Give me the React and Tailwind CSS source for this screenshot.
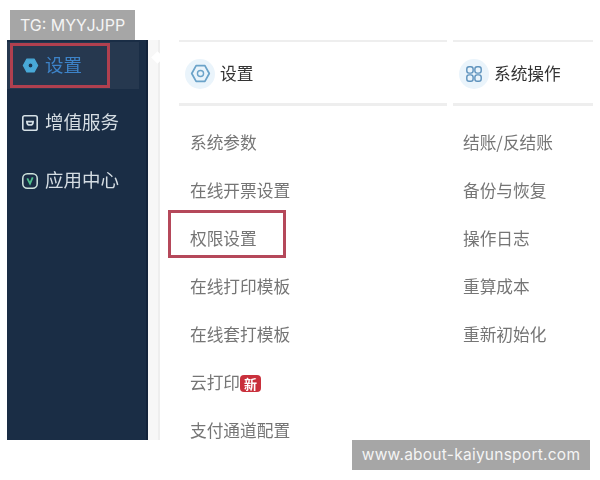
const FONT = { fontFamily: '"Noto Sans CJK SC", sans-serif' }

const LEFT_ITEMS = ['系统参数', '在线开票设置', '权限设置', '在线打印模板', '在线套打模板', '云打印', '支付通道配置']
const RIGHT_ITEMS = ['结账/反结账', '备份与恢复', '操作日志', '重算成本', '重新初始化']

function HexIcon({ className, fill, stroke, dot }) {
  return (
    <svg viewBox="0 0 24 24" className={className}>
      <path d="M7 3h10l5 9-5 9H7l-5-9z" fill={fill} stroke={stroke} strokeWidth="2" strokeLinejoin="round" />
      <circle cx="12" cy="12" r="3.5" fill={dot} stroke={stroke} strokeWidth="1.6" />
    </svg>
  )
}

function ServiceIcon() {
  return (
    <svg viewBox="0 0 20 20" className="w-[18px] h-[18px] shrink-0" fill="none" stroke="#d5e0e6" strokeWidth="1.8">
      <rect x="2" y="2" width="16" height="16" rx="2" />
      <path d="M6.5 8.5c0 5 7 5 7 0z" />
    </svg>
  )
}

function AppIcon() {
  return (
    <svg viewBox="0 0 20 20" className="w-[18px] h-[18px] shrink-0" fill="none">
      <rect x="2" y="2" width="16" height="16" rx="5" stroke="#cfe3dc" strokeWidth="1.7" />
      <path d="M7 7l3 6 3-7" stroke="#4fc08d" strokeWidth="2" />
    </svg>
  )
}

function GridIcon() {
  return (
    <svg viewBox="0 0 20 20" className="w-[18px] h-[18px]" fill="none" stroke="#5f93bd" strokeWidth="1.6">
      <rect x="2" y="2" width="7" height="7" rx="2.5" />
      <rect x="11" y="2" width="7" height="7" rx="2.5" />
      <rect x="2" y="11" width="7" height="7" rx="2.5" />
      <rect x="11" y="11" width="7" height="7" rx="2.5" />
    </svg>
  )
}

function Tag({ children, className }) {
  return (
    <div
      className={`h-[30px] bg-[#a6a6a6] text-[#f4f4f4] flex items-center justify-center ${className}`}
      style={{ fontFamily: 'Inter, sans-serif' }}
    >
      {children}
    </div>
  )
}

function Sidebar() {
  return (
    <div className="w-[141px] h-full shrink-0 bg-[#1a2d45] border-r-2 border-[#13233a] flex flex-col pt-[2px] text-[18.5px] text-[#d5dde3]">
      <div className="h-[47px] mr-[7px] bg-[#26384f] flex items-center">
        <div className="w-[100px] h-[45px] ml-[3px] border-[3px] border-[#b0404f] flex items-center pl-[9px] gap-[6px] text-[#3d83c8]">
          <HexIcon className="w-[17px] h-[17px] shrink-0" fill="#49a9d8" stroke="#49a9d8" dot="#1d3550" />
          <span className="blur-[0.5px] -translate-y-[1px]">设置</span>
        </div>
      </div>
      <div className="mt-[11px] h-[46px] flex items-center pl-[14px] gap-[6px]">
        <ServiceIcon />
        <span className="blur-[0.4px] -translate-y-[1px]">增值服务</span>
      </div>
      <div className="mt-[12px] h-[46px] flex items-center pl-[14px] gap-[6px]">
        <AppIcon />
        <span className="blur-[0.4px] -translate-y-[1px]">应用中心</span>
      </div>
    </div>
  )
}

function MenuRow({ label, boxed, isNew }) {
  return (
    <div className="h-[48px] shrink-0 flex items-center relative text-[16.7px] text-[#757575]">
      <span className="blur-[0.5px] whitespace-nowrap">{label}</span>
      {isNew && (
        <span className="w-[21px] h-[17px] rounded-[4px] bg-[#c9303c] text-white text-[13px] leading-[17px] text-center font-bold blur-[0.4px]">新</span>
      )}
      {boxed && (
        <div className="absolute left-[-22px] top-[-5px] w-[118px] h-[48px] border-[3px] border-[#b5485a]" />
      )}
    </div>
  )
}

function MenuColumn({ className, items, icon, title }) {
  return (
    <div className={`h-full flex flex-col ${className}`}>
      <div className="h-[2px] shrink-0 bg-[#eeeeee]" />
      <div className="h-[64px] shrink-0 pl-[6px] pt-[2px] flex items-center border-b-[3px] border-[#eeeeee] text-[16.7px] text-[#333333]">
        <div className="w-[30px] h-[30px] rounded-full bg-[#eaf4fb] flex items-center justify-center shrink-0">{icon}</div>
        <span className="ml-[5px] blur-[0.4px] whitespace-nowrap">{title}</span>
      </div>
      <div className={`pt-[13px] ${items.pad}`}>
        {items.list.map(item => (
          <MenuRow key={item} label={item} boxed={item === '权限设置'} isNew={item === '云打印'} />
        ))}
      </div>
    </div>
  )
}

export default function App() {
  return (
    <div className="w-[600px] h-[480px] bg-white flex flex-col overflow-hidden" style={FONT}>
      <div className="h-[40px] shrink-0 pt-[10px] pl-[10px]">
        <Tag className="w-[125px] text-[16px]">TG: MYYJJPP</Tag>
      </div>
      <div className="h-[400px] shrink-0 mx-[7px] flex relative overflow-hidden">
        <Sidebar />
        <div className="w-[12px] shrink-0 bg-[#f7f7f7] border-r-2 border-[#eeeeee] relative">
          <div className="absolute top-[13px] left-[5px] w-[9px] h-[9px] rotate-45 bg-white" />
        </div>
        <div className="w-[19px] shrink-0" />
        <MenuColumn
          className="w-[268px] shrink-0"
          icon={<HexIcon className="w-[21px] h-[21px]" fill="none" stroke="#6ba3c9" dot="none" />}
          title="设置"
          items={{ list: LEFT_ITEMS, pad: 'pl-[11px]' }}
        />
        <div className="w-[6px] shrink-0" />
        <MenuColumn
          className="flex-1"
          icon={<GridIcon />}
          title="系统操作"
          items={{ list: RIGHT_ITEMS, pad: 'pl-[10px]' }}
        />
      </div>
      <div className="flex justify-end pr-[10px]">
        <Tag className="w-[238px] text-[15.5px] tracking-[0.25px]">www.about-kaiyunsport.com</Tag>
      </div>
    </div>
  )
}
